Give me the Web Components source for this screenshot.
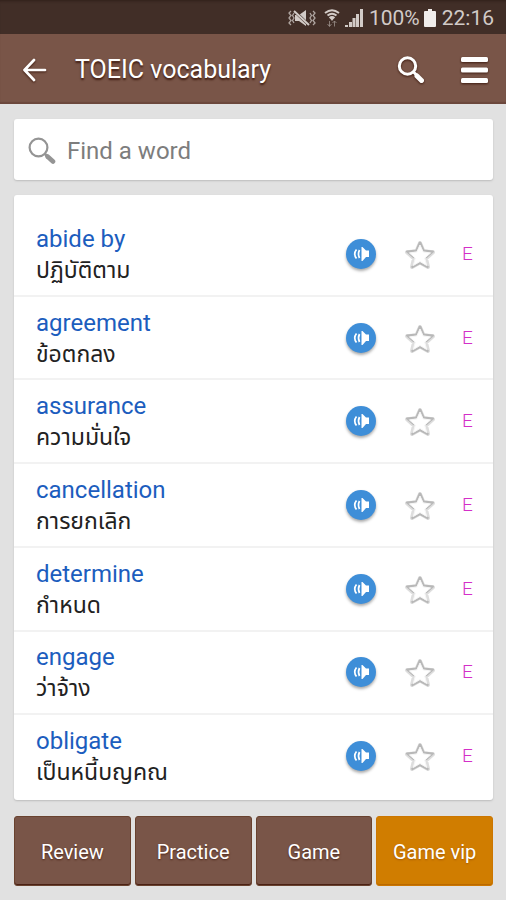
<!DOCTYPE html>
<html lang="en">
<head>
<meta charset="utf-8">
<meta name="viewport" content="width=device-width, initial-scale=1">
<title>TOEIC vocabulary</title>
<style>
  html, body { margin: 0; }
  body { background: #e1e1e1; font-family: Roboto, "Noto Sans Thai", "Noto Sans", sans-serif; }
</style>
</head>
<body>
<vocab-app></vocab-app>
<script>
const define = (name, html) => {
  const template = document.createElement('template');
  template.innerHTML = html;
  customElements.define(name, class extends HTMLElement {
    constructor() {
      super();
      this.attachShadow({ mode: 'open' }).append(template.content.cloneNode(true));
    }
  });
};

define('status-bar', `
<style>
  :host { display: flex; align-items: center; justify-content: flex-end; box-sizing: border-box; height: 34px; padding: 2px 12px 0 0; background: #412e27; color: #d2cbc7; font-size: 21px; line-height: 24px; box-shadow: inset 0 3px 3px -2px #2f1f1a; }
  svg { display: block; fill: currentColor; }
  .vib { margin-right: 8px; } .wifi { margin-right: 5px; } .sig { margin-right: 6px; } .bat { margin: 0 6px 0 4px; color: #f0edeb; }
</style>
<svg class="vib" width="28" height="18" viewBox="0 0 28 18" aria-hidden="true">
  <path d="M7 6h4l7-5v16l-7-5H7z"/>
  <path d="M5 1l16 15" stroke="#412e27" stroke-width="3"/>
  <path d="M6 2l15 14" fill="none" stroke="currentColor" stroke-width="2"/>
  <path d="M3 2L1 4l2 2.500L1 9l2 2.500L1 14l2 2M6 4L4.500 6.500 6 9l-1.500 2.500L6 14M22 4l1.500 2.500L22 9l1.500 2.500L22 14M25 2l2 2-2 2.500L27 9l-2 2.500 2 2.500-2 2" fill="none" stroke="currentColor" stroke-width="1.300" opacity=".75"/>
</svg>
<svg class="wifi" width="16" height="18" viewBox="0 0 16 18" aria-hidden="true">
  <path d="M1 4q7-5.500 14 0M3.500 6.500q4.500-3.500 9 0M5.500 9q2.500-2 5 0" fill="none" stroke="currentColor" stroke-width="1.900"/>
  <path d="M8 12L5.500 8.500h5z"/>
  <path d="M5.500 12v5M3.500 15l2 2.500 2-2.500M10.500 17.500v-5M8.500 14l2-2 2 2" fill="none" stroke="currentColor" opacity=".5"/>
</svg>
<svg class="sig" width="18" height="18" viewBox="0 0 18 18" aria-hidden="true">
  <path d="M0 16h3v2H0zM4 13h3v5H4zM7.500 9h3v9h-3zM11 5h3v13h-3zM15 0h3v18h-3z"/>
</svg>
<span>100%</span>
<svg class="bat" width="12" height="18" viewBox="0 0 12 18" aria-hidden="true"><path d="M4 0h4v2h3q1 0 1 1v14q0 1-1 1H1q-1 0-1-1V3q0-1 1-1h3z"/></svg>
<time>22:16</time>
`);

define('search-icon', `
<style>:host { display: block; width: 28px; height: 28px; } svg { display: block; width: 100%; height: 100%; }</style>
<svg viewBox="0 0 28 28" fill="none" stroke="currentColor" aria-hidden="true">
  <circle cx="10.500" cy="10.500" r="8.900" stroke-width="2.200"/>
  <path d="M16.500 16.500l3 3" stroke-width="2.500"/><path d="M19.500 19.500l5.500 5" stroke-width="4.600" stroke-linecap="round"/>
</svg>
`);

define('app-bar', `
<style>
  :host { display: flex; align-items: center; box-sizing: border-box; height: 70px; padding: 1px 18px 0 22px; background: #795548; color: #fff; box-shadow: inset 0 -2px 1px #6b473c; }
  h1 { flex: 1; margin: 0 0 0 27px; font-weight: 400; font-size: 25px; line-height: 32px; text-shadow: 0 2px 2px #3f1c10; }
  button { display: block; padding: 0; border: 0; background: none; color: inherit; filter: drop-shadow(0 1px 1px #3f1c10); }
  svg { display: block; }
  .menu { margin-left: 35px; }
</style>
<button aria-label="Back"><svg width="26" height="24" viewBox="0 0 26 24" fill="none" stroke="currentColor" stroke-width="2.700" stroke-linecap="round" stroke-linejoin="round"><path d="M23 12H3M12 2L2.500 12l9.500 10"/></svg></button>
<h1>TOEIC vocabulary</h1>
<button aria-label="Search"><svg width="28" height="30" viewBox="0 0 28 30" fill="none" stroke="currentColor"><circle cx="10.500" cy="11" r="8.200" stroke-width="3"/><path d="M16.500 17l3 3" stroke-width="3"/><path d="M20 21l4.500 4.500" stroke-width="5" stroke-linecap="round"/></svg></button>
<button class="menu" aria-label="Menu"><svg width="28" height="26" viewBox="0 0 28 26" fill="currentColor"><rect x="1" width="27" height="5" rx="1.500"/><rect x="1" y="10.500" width="27" height="5" rx="1.500"/><rect x="1" y="21" width="27" height="5" rx="1.500"/></svg></button>
`);

define('search-box', `
<style>
  :host { display: block; background: #fff; border-radius: 3px; box-shadow: 0 1px 2px #bbb; }
  label { display: flex; align-items: center; gap: 11px; box-sizing: border-box; height: 61px; padding: 2px 14px 0; color: #949494; }
  search-icon { flex: none; }
  input { flex: 1; min-width: 0; padding: 0; border: 0; outline: 0; background: none; font: 24px/32px Roboto, "Noto Sans", sans-serif; color: #333; }
  input::placeholder { color: #7d7d7d; opacity: 1; }
</style>
<label><search-icon></search-icon><input type="text" placeholder="Find a word" aria-label="Find a word"></label>
`);

define('word-row', `
<style>
  :host { display: flex; align-items: center; box-sizing: border-box; min-height: 80px; padding: 0 15px 0 22px; border-bottom: 2px solid #f2f2f2; }
  :host(:last-child) { border-color: transparent; }
  .text { flex: 1; min-width: 0; padding-top: 2px; }
  .word { font-size: 24px; line-height: 32px; color: #1c5dbe; }
  .meaning { font-size: 23px; line-height: 32px; color: #222; }
  button { display: block; padding: 0; border: 0; background: none; }
  svg { display: block; }
  .play { width: 30px; height: 30px; border-radius: 50%; background: #3e8ed8; box-shadow: 0 2px 3px #aaa; }
  .star { margin: 2px 0 0 28px; }
  .level { margin-left: 26px; width: 16px; font-size: 19px; font-weight: 300; line-height: 24px; color: #d42fc8; }
</style>
<div class="text"><div class="word"><slot></slot></div><div class="meaning" lang="th"><slot name="meaning"></slot></div></div>
<button class="play" aria-label="Play"><svg width="30" height="30" viewBox="0 0 30 30"><path d="M15.500 8h1l3.500 3.500h3v6.500h-3L16.500 22h-1z" fill="#fff"/><path d="M13.500 11q-2 4 0 8M10.500 10.500q-3.500 4.500 0 9" fill="none" stroke="#fff" stroke-width="1.700"/></svg></button>
<button class="star" aria-label="Favourite"><svg width="32" height="32" viewBox="0 0 32 32"><g fill="none" stroke-linejoin="round"><path d="M16 4l3.600 8.200 9.400 1-7 6.300 2 8.500-8-4.500L8 28l2-8.500-7-6.300 9.400-1z" stroke="#dedede" stroke-width="4"/><path d="M16 3l3.600 8.500L29 12.500l-7 6M10 18.500l-7-6 9.400-1L16 3M7.500 28.500l8.500-4.500 8.500 4.500" stroke="#b8b8b8" stroke-width="2"/><path d="M16 6l3.200 7 7.300 1-5.800 5 2 7.500-6.700-4-6.700 4 2-7.500-5.800-5 7.300-1z" fill="#fff" stroke="#f6f6f6"/></g></svg></button>
<span class="level">E</span>
`);

define('word-list', `
<style>
  :host { display: flex; flex-direction: column; box-sizing: border-box; padding: 18px 0 1px; background: #fff; border-radius: 3px; box-shadow: 0 1px 2px #bbb; }
  ::slotted(word-row) { flex: 1; }
</style>
<slot></slot>
`);

define('action-button', `
<style>
  :host { display: block; flex: 1; min-width: 0; }
  button { display: block; width: 100%; height: 70px; padding: 2px 0 0; border: 1px solid #69422f; border-radius: 3px; background: #795548; color: #fff; font: 400 20px/24px Roboto, "Noto Sans", sans-serif; text-shadow: 0 1px 2px #4d2517; box-shadow: inset 0 -1px #4a2114; }
  :host([accent]) button { background: #d07d00; border-color: #cc7600; box-shadow: inset 0 -1px #b96900; text-shadow: 0 1px 2px #a65a00; }
</style>
<button><slot></slot></button>
`);

define('vocab-app', `
<style>
  :host { display: flex; flex-direction: column; min-height: 100vh; }
  main { flex: 1; display: flex; flex-direction: column; gap: 15px; padding: 15px 13px 14px 14px; }
  word-list { flex: 1; }
  nav { display: flex; gap: 4px; padding-top: 1px; }
</style>
<status-bar></status-bar>
<app-bar></app-bar>
<main>
  <search-box></search-box>
  <word-list>
    <word-row>abide by<span slot="meaning">ปฏิบัติตาม</span></word-row>
    <word-row>agreement<span slot="meaning">ข้อตกลง</span></word-row>
    <word-row>assurance<span slot="meaning">ความมั่นใจ</span></word-row>
    <word-row>cancellation<span slot="meaning">การยกเลิก</span></word-row>
    <word-row>determine<span slot="meaning">กำหนด</span></word-row>
    <word-row>engage<span slot="meaning">ว่าจ้าง</span></word-row>
    <word-row>obligate<span slot="meaning">เป็นหนี้บญคณ</span></word-row>
  </word-list>
  <nav>
    <action-button>Review</action-button>
    <action-button>Practice</action-button>
    <action-button>Game</action-button>
    <action-button accent>Game vip</action-button>
  </nav>
</main>
`);
</script>
</body>
</html>
